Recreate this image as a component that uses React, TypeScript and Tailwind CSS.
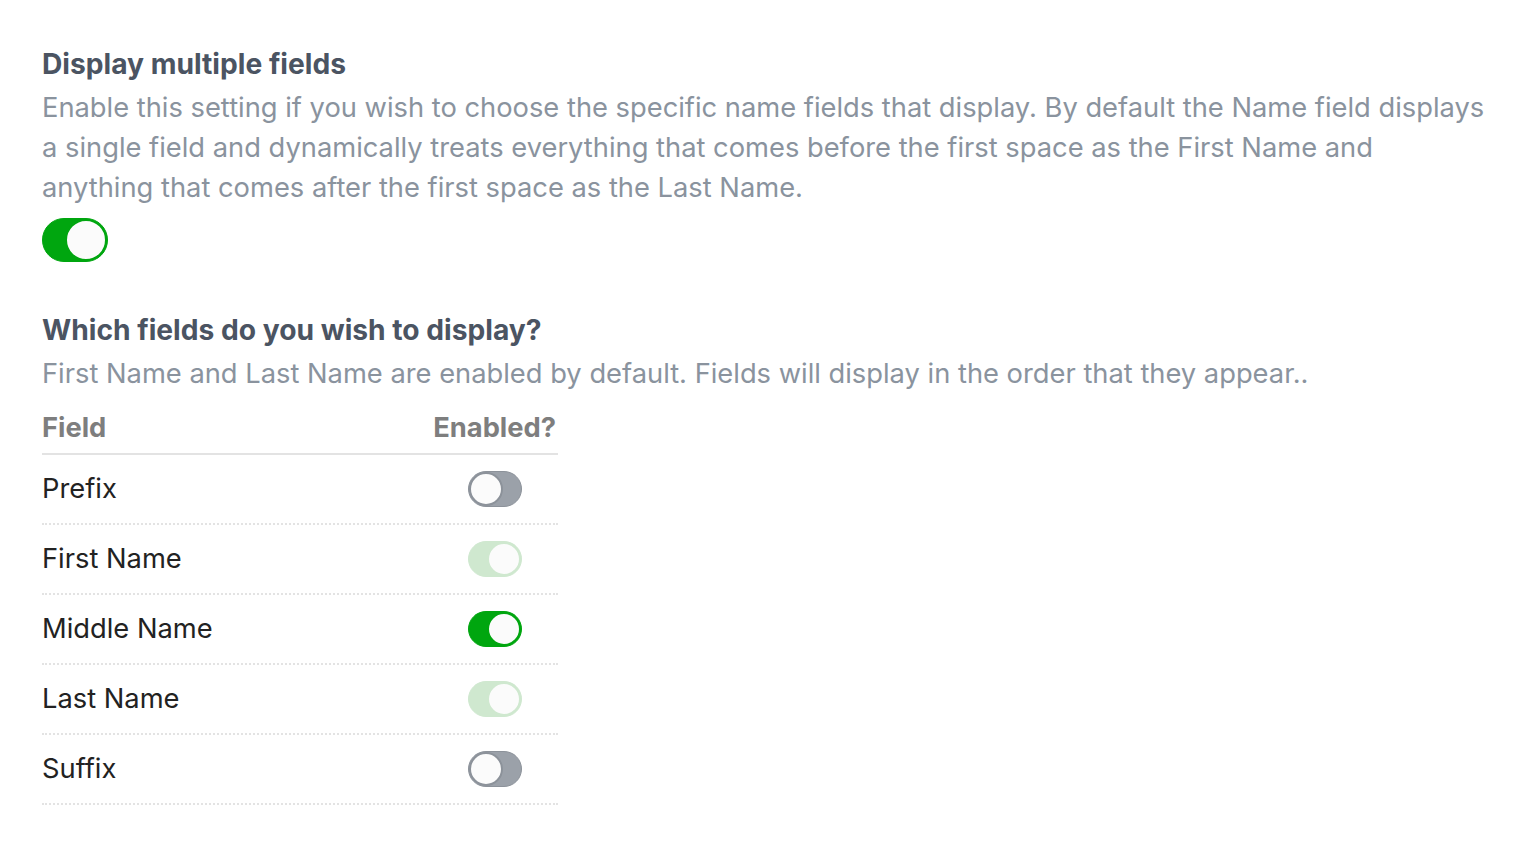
import React from "react";

type ToggleProps = { on: boolean; disabled?: boolean; size?: "lg" | "sm" };

const Toggle = ({ on, disabled, size = "sm" }: ToggleProps) => {
  const box = size === "lg" ? "w-[66px] h-[44px]" : "w-[54px] h-[36px]";
  const knob = size === "lg" ? "w-[42px] h-[42px]" : "w-[34px] h-[34px]";
  let track = "bg-[#9ba1a9] border-[#8c929a]";
  let knobBorder = "border-[#8c929a]";
  if (on && !disabled) {
    track = "bg-[#00a60f] border-[#00a60f]";
    knobBorder = "border-[#00a60f]";
  }
  if (on && disabled) {
    track = "bg-[#cfe8cf] border-[#cfe8cf]";
    knobBorder = "border-[#cfe8cf]";
  }
  return (
    <div className={`${box} ${track} rounded-full border flex items-center ${on ? "justify-end" : "justify-start"}`}>
      <div className={`${knob} ${knobBorder} rounded-full border-2 bg-[#fbfbfb]`} />
    </div>
  );
};

const rows = [
  { name: "Prefix", on: false },
  { name: "First Name", on: true, disabled: true },
  { name: "Middle Name", on: true },
  { name: "Last Name", on: true, disabled: true },
  { name: "Suffix", on: false },
];

const App = () => {
  return (
    <div className="min-h-screen bg-white pl-[42px] pr-[20px] pt-[44px] font-['Inter',sans-serif]">
      <h2 className="text-[28.2px] leading-[40px] font-bold text-[#4b5462]">Display multiple fields</h2>
      <p className="whitespace-nowrap text-[27.3px] leading-[40px] text-[#8a939e] mt-[4px]">
        Enable this setting if you wish to choose the specific name fields that display. By default the Name field displays
        <br />
        a single field and dynamically treats everything that comes before the first space as the First Name and
        <br />
        anything that comes after the first space as the Last Name.
      </p>
      <div className="mt-[10px]">
        <Toggle on size="lg" />
      </div>

      <h2 className="text-[28.2px] leading-[40px] font-bold text-[#4b5462] mt-[48px]">Which fields do you wish to display?</h2>
      <p className="text-[27.3px] leading-[40px] text-[#8a939e] mt-[4px]">
        First Name and Last Name are enabled by default. Fields will display in the order that they appear..
      </p>

      <div className="w-[516px] mt-[14px]">
        <div className="flex justify-between items-center leading-[40px] pb-[5px] border-b-2 border-[#e3e3e3] text-[27.3px] font-bold text-[#7e7e7e]">
          <span>Field</span>
          <span className="pr-[2px]">Enabled?</span>
        </div>
        {rows.map((r) => (
          <div key={r.name} className="flex justify-between items-center h-[70px] border-b-2 border-dotted border-[#e3e3e3]">
            <span className="text-[27.3px] text-[#222222]">{r.name}</span>
            <div className="pr-[36px]">
              <Toggle on={r.on} disabled={r.disabled} />
            </div>
          </div>
        ))}
      </div>
    </div>
  );
};

export default App;
